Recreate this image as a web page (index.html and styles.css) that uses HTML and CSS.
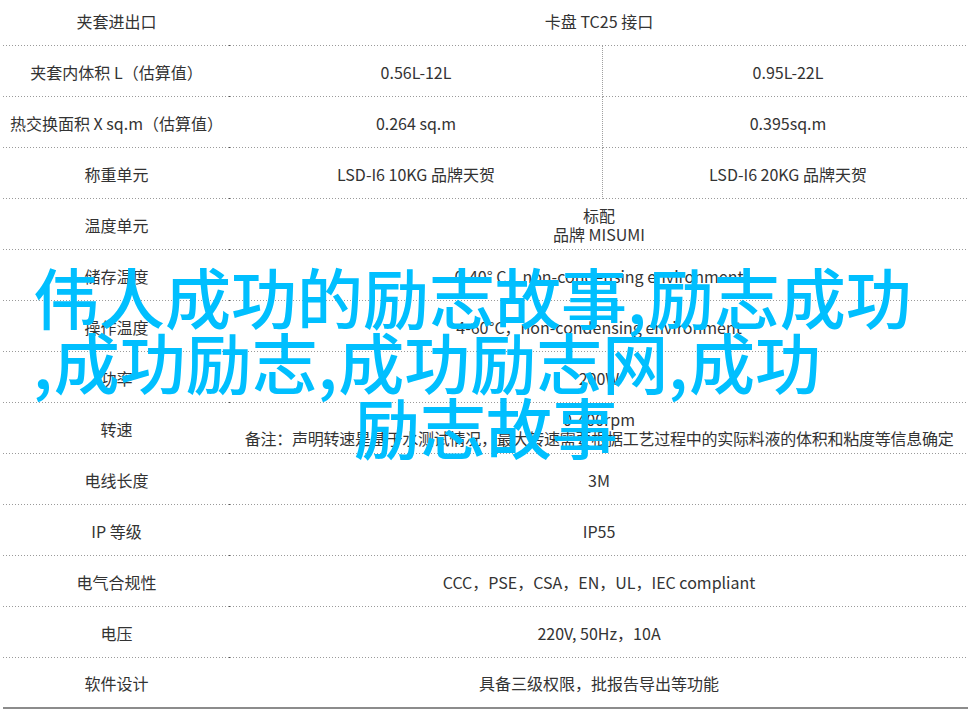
FILE: index.html
```html
<!DOCTYPE html>
<html lang="zh-CN">
<head>
<meta charset="utf-8">
<title>规格参数</title>
<link rel="stylesheet" href="styles.css">
</head>
<body>
<div class="page">
  <table class="spec">
    <colgroup>
      <col class="c1">
      <col class="c2">
      <col class="c3">
    </colgroup>
    <tbody>
      <tr><td>夹套进出口</td><td colspan="2">卡盘 TC25 接口</td></tr>
      <tr><td>夹套内体积 L（估算值）</td><td>0.56L-12L</td><td class="split">0.95L-22L</td></tr>
      <tr><td>热交换面积 X sq.m（估算值）</td><td>0.264 sq.m</td><td class="split">0.395sq.m</td></tr>
      <tr><td>称重单元</td><td>LSD-I6 10KG 品牌天贺</td><td class="split">LSD-I6 20KG 品牌天贺</td></tr>
      <tr><td>温度单元</td><td colspan="2" class="two">标配<br>品牌 MISUMI</td></tr>
      <tr><td>储存温度</td><td colspan="2">0-40° C，non-condensing environment</td></tr>
      <tr><td>操作温度</td><td colspan="2">4-60°C，non-condensing environment</td></tr>
      <tr><td>功率</td><td colspan="2">200W</td></tr>
      <tr><td>转速</td><td colspan="2" class="two">0-400rpm<br><span class="note">备注：声明转速是基于水测试情况，最大转速需要根据工艺过程中的实际料液的体积和粘度等信息确定</span></td></tr>
      <tr><td>电线长度</td><td colspan="2">3M</td></tr>
      <tr><td>IP 等级</td><td colspan="2">IP55</td></tr>
      <tr><td>电气合规性</td><td colspan="2">CCC，PSE，CSA，EN，UL，IEC compliant</td></tr>
      <tr><td>电压</td><td colspan="2">220V, 50Hz，10A</td></tr>
      <tr class="last"><td>软件设计</td><td colspan="2">具备三级权限，批报告导出等功能</td></tr>
    </tbody>
  </table>
  <div class="overlay">
    <div class="ov-line">伟人成功的励志故事<span class="cm">,</span>励志成功</div>
    <div class="ov-line"><span class="cm">,</span>成功励志<span class="cm">,</span>成功励志网<span class="cm">,</span>成功</div>
    <div class="ov-line ov-last">励志故事</div>
  </div>
</div>
</body>
</html>
```

FILE: styles.css
```css
html, body {
  margin: 0;
  padding: 0;
  background: #ffffff;
}

.page {
  position: relative;
  width: 971px;
  height: 716px;
  overflow: hidden;
  font-family: "Noto Sans CJK SC", "Noto Sans", sans-serif;
  color: #333333;
}

.spec {
  width: 965px;
  margin: -5px 0 0 3px;
  table-layout: fixed;
  border-collapse: separate;
  border-spacing: 0;
  font-size: 16px;
}

.spec .c1 { width: 227px; }
.spec .c2 { width: 372px; }
.spec .c3 { width: 366px; }

.spec td {
  box-sizing: border-box;
  height: 51px;
  padding: 0;
  text-align: center;
  vertical-align: middle;
  line-height: 20px;
  white-space: nowrap;
  background-image: linear-gradient(to right, #9a9a9a 1px, transparent 1px);
  background-size: 3px 1px;
  background-repeat: repeat-x;
  background-position: left bottom;
}

.spec td:first-child {
  background-image:
    linear-gradient(#555555, #555555),
    linear-gradient(to right, #9a9a9a 1px, transparent 1px);
  background-size: 1px 1px, 3px 1px;
  background-repeat: no-repeat, repeat-x;
  background-position: right bottom, left bottom;
}

.spec td.split {
  border-left: 1px dotted #a0a0a0;
  padding-left: 5px;
}

.spec td.two {
  line-height: 19px;
}

.spec .note {
  letter-spacing: -0.25px;
}

.spec tr.last td {
  background-image: none;
  border-bottom: 2px solid #8c8c8c;
}

.overlay {
  position: absolute;
  left: 33px;
  top: 263px;
  width: 900px;
  font-family: "Noto Sans CJK SC", sans-serif;
  font-size: 66px;
  font-weight: 500;
  line-height: 65px;
  color: #00bfff;
  white-space: nowrap;
}

.overlay .cm {
  margin-right: 1px;
}

.ov-last {
  padding-left: 321px;
}
```
